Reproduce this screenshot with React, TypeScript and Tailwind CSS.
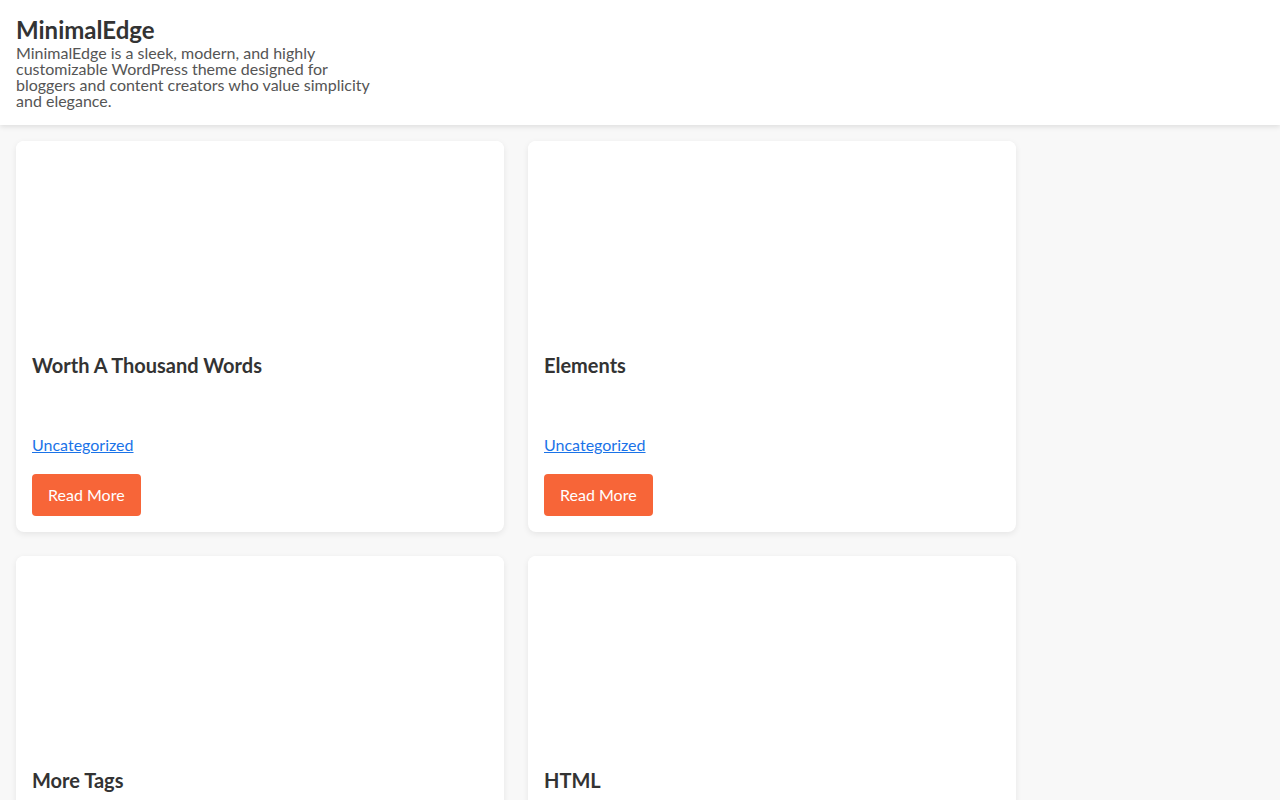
import React from "react";

interface Post {
  title: string;
  category: string;
}

const posts: Post[] = [
  { title: "Worth A Thousand Words", category: "Uncategorized" },
  { title: "Elements", category: "Uncategorized" },
  { title: "More Tags", category: "Uncategorized" },
  { title: "HTML", category: "Uncategorized" },
];

const PostCard: React.FC<{ post: Post }> = ({ post }) => (
  <article className="flex flex-col overflow-hidden rounded-lg bg-white shadow-[0_2px_6px_rgba(0,0,0,0.08)]">
    {/* featured image placeholder */}
    <div className="h-[200px] w-full bg-white" />
    <div className="flex flex-col px-4 pt-3 pb-4">
      <h2 className="text-[20px] font-bold leading-6 text-[#333333]">
        {post.title}
      </h2>
      <div className="h-[56px]" />
      <a
        href="#"
        className="self-start text-[16px] leading-6 text-[#1a73e8] underline"
      >
        {post.category}
      </a>
      <a
        href="#"
        className="mt-[17px] flex h-[42px] items-center self-start rounded bg-[#f76538] px-4 text-[16px] text-white"
      >
        Read More
      </a>
    </div>
  </article>
);

export default function App() {
  return (
    <div className="min-h-screen bg-[#f8f8f8] font-['Lato',_'Liberation_Sans',_sans-serif]">
      <header className="relative z-10 bg-white p-4 shadow-[0_2px_5px_rgba(0,0,0,0.1)]">
        <h1 className="text-[24px] font-bold leading-7 text-[#333333]">
          MinimalEdge
        </h1>
        <p className="mt-px max-w-[365px] text-[16px] leading-4 text-[#555555]">
          MinimalEdge is a sleek, modern, and highly customizable WordPress
          theme designed for bloggers and content creators who value
          simplicity and elegance.
        </p>
      </header>
      <main className="p-4">
        <div className="grid grid-cols-[488px_488px] gap-6">
          {posts.map((post) => (
            <PostCard key={post.title} post={post} />
          ))}
        </div>
      </main>
    </div>
  );
}
